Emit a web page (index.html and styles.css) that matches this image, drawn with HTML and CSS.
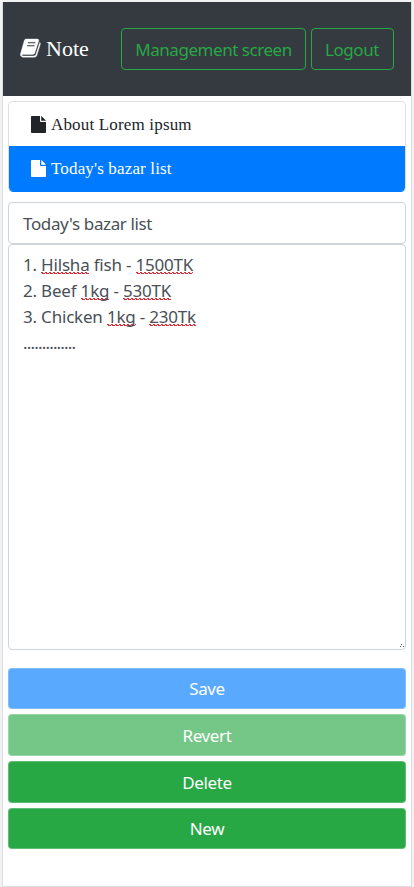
FILE: index.html
```html
<!DOCTYPE html>
<html lang="en">
<head>
<meta charset="utf-8">
<title>Note</title>
<link rel="stylesheet" href="styles.css">
</head>
<body>
<div class="app">
  <header class="navbar">
    <a class="brand">
      <svg class="book" viewBox="0 0 22 20"><path class="cover" d="M6.600.5H18c1.400 0 2 .9 1.600 2.200L15.500 15.200c-.3 1-1 1.500-2 1.500H2.600c-.8 0-1 .8-.4 1.200.3.300.7.400 1.200.400h11.300c.9 0 1.500-.4 1.800-1.200L20.700 4.200c.7.500.9 1.100.6 2L17.700 17.700c-.4 1.300-1.300 2-2.700 2H3.300C1.200 19.700-.1 17.900.500 16L4.400 2.300C4.800 1.100 5.500.5 6.600.5z"/><path class="lines" d="M8.300 4.500h7.800M7.400 7.600h7.800"/></svg>
      <span>Note</span>
    </a>
    <nav class="actions">
      <a class="outline manage"><span>Management screen</span></a>
      <a class="outline logout"><span>Logout</span></a>
    </nav>
  </header>
  <main class="content">
    <div class="list">
      <a class="item"><svg class="file" viewBox="0 0 15 17"><path d="M.8 0H9v5.200c0 .5.300.8.800.8H15v10.200c0 .5-.3.800-.8.800H.8c-.5 0-.8-.3-.8-.8V.8C0 .3.3 0 .8 0zM10.200.100c.3.100.5.200.7.400l3.500 3.500c.2.200.4.500.5.800h-4.700z"/></svg><span class="about">About Lorem ipsum</span></a>
      <a class="item active"><svg class="file" viewBox="0 0 15 17"><path d="M.8 0H9v5.200c0 .5.300.8.800.8H15v10.200c0 .5-.3.800-.8.800H.8c-.5 0-.8-.3-.8-.8V.8C0 .3.3 0 .8 0zM10.200.100c.3.100.5.200.7.400l3.500 3.500c.2.200.4.500.5.800h-4.700z"/></svg><span class="today">Today's bazar list</span></a>
    </div>
    <div class="field title"><span>Today's bazar list</span></div>
    <div class="field note">
      <div class="line l1">1. <u>Hilsha</u> fish - <u>1500TK</u></div>
      <div class="line l2">2. Beef <u>1kg</u> - <u>530TK</u></div>
      <div class="line l3">3. Chicken <u>1kg</u> - <u>230Tk</u></div>
      <div class="line l4">..............</div>
      <svg class="grip" viewBox="0 0 4 3"><path d="M1 0h1v1H1zM0 2h1v1H0zM3 2h1v1H3z"/></svg>
    </div>
    <div class="buttons">
      <button class="btn save">Save</button>
      <button class="btn revert">Revert</button>
      <button class="btn">Delete</button>
      <button class="btn">New</button>
    </div>
  </main>
</div>
</body>
</html>
```
FILE: styles.css
```css
* { box-sizing: border-box; }
body { margin: 0; height: 887px; padding: 2px 2px 0; background: #f1f2f4; overflow: hidden; font: 17px/26px "Noto Sans", sans-serif; }
.app { height: 885px; background: #fff; border: 1px solid #dcdde0; border-top: 0; }
.navbar { height: 94px; background: #343a40; display: flex; justify-content: space-between; align-items: center; padding: 0 17px; }
.brand { display: flex; align-items: center; gap: 5px; color: #fff; font: 22px/30px "Liberation Serif", serif; }
.book { width: 21px; height: 20px; fill: #fff; margin-top: -2px; }
.cover { stroke: #fff; stroke-width: .35; }
.lines { stroke: #343a40; stroke-width: 1.2; }
.actions { display: flex; gap: 5px; }
.outline { height: 42px; border: 1px solid #28a745; border-radius: 4px; color: #28a745; display: flex; align-items: center; justify-content: center; white-space: nowrap; letter-spacing: -.46px; padding-top: 1px; }
.manage { width: 185px; }
.logout { width: 83px; padding-right: 1px; }
.content { padding: 5px 5px 0; }
.list { height: 91px; border: 1px solid #dfdfdf; border-bottom-color: #007bff; border-radius: 5px; overflow: hidden; }
.item { height: 44px; display: flex; align-items: center; padding-left: 22px; gap: 5px; color: #212529; font: 17px/26px "Liberation Serif", serif; }
.about { letter-spacing: .17px; padding-top: 2px; }
.today { letter-spacing: .15px; }
.item.active { height: 46px; margin: 0 -1px; padding: 0 0 1px 23px; background: #007bff; color: #fff; }
.active .today { padding-top: 1px; }
.file { width: 15px; height: 17px; fill: currentColor; }
.field { border: 1px solid #ced4da; border-radius: 4px; color: #495057; padding-left: 14px; white-space: nowrap; }
.title { height: 42px; margin-top: 10px; padding-top: 8px; letter-spacing: -.37px; }
.note { position: relative; height: 406px; padding-top: 7px; letter-spacing: -.2px; }
.l4 { letter-spacing: -.82px; }
.line u {
  text-decoration: none;
  background-image:
    linear-gradient(90deg, #dc2a32 2px, transparent 2px),
    linear-gradient(90deg, #dc2a32 3px, transparent 3px);
  background-size: 4px 1px, 4px 1px;
  background-position: 0 19px, 1px 20px;
  background-repeat: repeat-x;
}
.grip { position: absolute; right: 1px; bottom: 2px; width: 4px; height: 3px; fill: #555; }
.buttons { margin-top: 17.5px; display: grid; gap: 5px; grid-template-rows: repeat(4, 41.7px); }
.btn { border: 1px solid rgba(255,255,255,.25); border-radius: 4px; background: #28a745; color: #fff; font: inherit; padding: 2px 0 0; letter-spacing: -.4px; }
.save { background: #59a9ff; }
.revert { background: #74c787; }
```
